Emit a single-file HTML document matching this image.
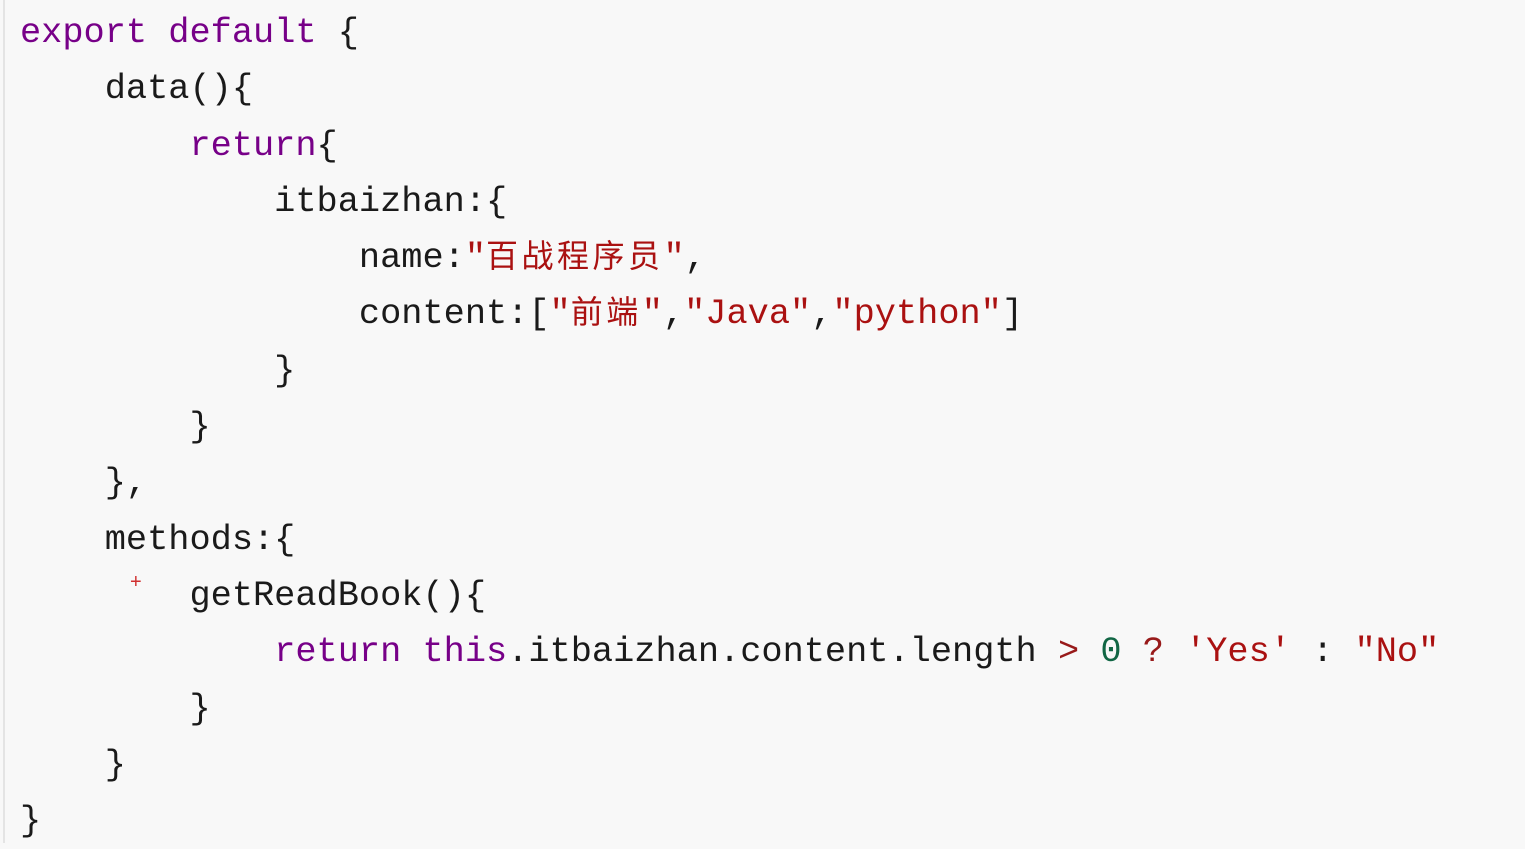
<!DOCTYPE html>
<html><head><meta charset="utf-8"><style>
html,body{margin:0;padding:0;width:1525px;height:843px;overflow:hidden;background:#f8f8f8}
.bl{position:absolute;left:3px;top:0;width:2px;height:843px;background:#e4e4e4}
.code{position:absolute;left:20px;top:5px;margin:0;font-family:"Liberation Mono","Noto Sans CJK SC",monospace;font-size:35.3px;color:#1a1a1a}
.code div{height:56.3px;line-height:56.3px;white-space:pre}
.k{color:#770088}.s{color:#aa1111}.n{color:#116644}.o{color:#981a1a}
.c{font-family:"Noto Sans CJK SC",sans-serif;font-size:32px;letter-spacing:3.5px;line-height:10px}
.plus{position:absolute;left:130px;top:571px;color:#d03030;font-family:"Liberation Sans",sans-serif;font-size:20px}
</style></head><body>
<div class="bl"></div>
<div class="code"><div><span class="k">export</span> <span class="k">default</span> {</div><div>    data(){</div><div>        <span class="k">return</span>{</div><div>            itbaizhan:{</div><div>                name:<span class="s">"<span class="c">百战程序员</span>"</span>,</div><div>                content:[<span class="s">"<span class="c">前端</span>"</span>,<span class="s">"Java"</span>,<span class="s">"python"</span>]</div><div>            }</div><div>        }</div><div>    },</div><div>    methods:{</div><div>        getReadBook(){</div><div>            <span class="k">return</span> <span class="k">this</span>.itbaizhan.content.length <span class="o">&gt;</span> <span class="n">0</span> <span class="o">?</span> <span class="s">'Yes'</span> : <span class="s">"No"</span></div><div>        }</div><div>    }</div><div>}</div></div>
<div class="plus">+</div>
</body></html>
